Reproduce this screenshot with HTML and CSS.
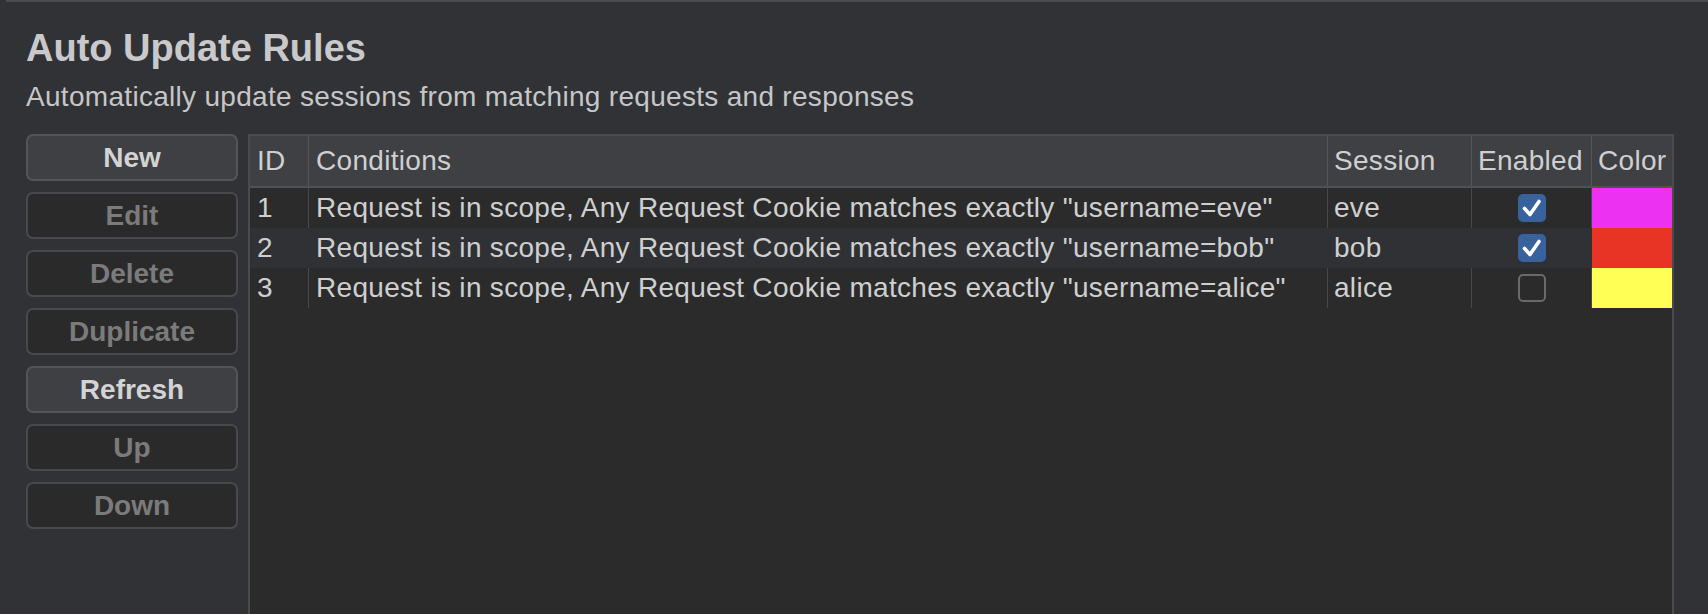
FILE: index.html
```html
<!DOCTYPE html>
<html lang="en">
<head>
  <meta charset="UTF-8">
  <title>Auto Update Rules</title>
  <link rel="stylesheet" href="styles.css">
</head>
<body>
  <div class="top-line"></div>
  <div class="page">
    <h1 class="title">Auto Update Rules</h1>
    <p class="subtitle">Automatically update sessions from matching requests and responses</p>

    <div class="content">
      <div class="buttons">
        <button class="btn active">New</button>
        <button class="btn">Edit</button>
        <button class="btn">Delete</button>
        <button class="btn">Duplicate</button>
        <button class="btn active">Refresh</button>
        <button class="btn">Up</button>
        <button class="btn">Down</button>
      </div>

      <div class="table">
        <div class="row head">
          <div class="cell id">ID</div>
          <div class="cell cond">Conditions</div>
          <div class="cell">Session</div>
          <div class="cell">Enabled</div>
          <div class="cell">Color</div>
        </div>

        <div class="row">
          <div class="cell id">1</div>
          <div class="cell cond">Request is in scope, Any Request Cookie matches exactly "username=eve"</div>
          <div class="cell">eve</div>
          <div class="cell check"><span class="box on"><svg viewBox="0 0 28 28"><path d="M6.5 14.5 L12 20.5 L21 7.5"/></svg></span></div>
          <div class="cell swatch magenta"></div>
        </div>

        <div class="row alt">
          <div class="cell id">2</div>
          <div class="cell cond">Request is in scope, Any Request Cookie matches exactly "username=bob"</div>
          <div class="cell">bob</div>
          <div class="cell check"><span class="box on"><svg viewBox="0 0 28 28"><path d="M6.5 14.5 L12 20.5 L21 7.5"/></svg></span></div>
          <div class="cell swatch red"></div>
        </div>

        <div class="row">
          <div class="cell id">3</div>
          <div class="cell cond">Request is in scope, Any Request Cookie matches exactly "username=alice"</div>
          <div class="cell">alice</div>
          <div class="cell check"><span class="box"></span></div>
          <div class="cell swatch yellow"></div>
        </div>
      </div>
    </div>
  </div>
</body>
</html>
```

FILE: styles.css
```css
html, body {
  margin: 0;
  height: 100%;
  overflow: hidden;
}
body {
  font-family: "Liberation Sans", Arial, sans-serif;
  background-color: #313235;
  color: #cfcfd0;
}
.top-line {
  height: 2px;
  margin-left: 6px;
  background-color: #4b4c4f;
}
.page {
  padding: 0 34px 0 26px;
}
.title {
  margin: 24px 0 0;
  font-size: 38px;
  line-height: 44px;
  font-weight: bold;
  color: #c9c9cb;
}
.subtitle {
  margin: 10px 0 0;
  font-size: 28px;
  line-height: 34px;
  letter-spacing: 0.3px;
  color: #c6c6c8;
}
.content {
  display: flex;
  gap: 10px;
  margin-top: 20px;
}
.buttons {
  display: flex;
  flex-direction: column;
  gap: 11px;
  width: 212px;
  flex-shrink: 0;
}
.btn {
  box-sizing: border-box;
  height: 47px;
  padding: 0;
  border: 2px solid #48494c;
  border-radius: 7px;
  background-color: #2a2a2b;
  color: #7b7b7c;
  font-family: "Liberation Sans", Arial, sans-serif;
  font-size: 28px;
  font-weight: bold;
}
.btn.active {
  background-color: #3f4043;
  border-color: #535457;
  color: #d3d3d4;
}
.table {
  flex: 1;
  min-height: 520px;
  border: 2px solid #4b4b4e;
  border-bottom: none;
  background-color: #2b2b2b;
}
.row {
  display: grid;
  grid-template-columns: 59px 1019px 144px 120px 80px;
  height: 40px;
  font-size: 28px;
  letter-spacing: 0.3px;
}
.row.head {
  height: 50px;
  background-color: #3f4043;
  border-bottom: 2px solid #505154;
}
.row.alt {
  background-color: #303134;
}
.cell {
  box-sizing: border-box;
  display: flex;
  align-items: center;
  padding: 0 6px;
  border-right: 1px solid #47484b;
  white-space: nowrap;
}
.head .cell {
  border-right-color: #545558;
}
.alt .cell {
  border-right-color: transparent;
}
.cell.id,
.cell.cond {
  padding: 0 7px;
}
.cell:last-child {
  border-right: none;
}
.cell.check {
  justify-content: center;
  padding-left: 6px;
}
.box {
  box-sizing: border-box;
  width: 28px;
  height: 28px;
  border-radius: 5px;
  border: 2px solid #6a6a6b;
  background-color: #2b2b2b;
}
.box.on {
  border: none;
  background-color: #37629d;
}
.box svg {
  display: block;
  width: 28px;
  height: 28px;
  fill: none;
  stroke: #ffffff;
  stroke-width: 3.6;
  stroke-linecap: round;
  stroke-linejoin: round;
}
.swatch {
  padding: 0;
}
.magenta { background-color: #ec31f3; }
.red { background-color: #e83424; }
.yellow { background-color: #ffff55; }
```
